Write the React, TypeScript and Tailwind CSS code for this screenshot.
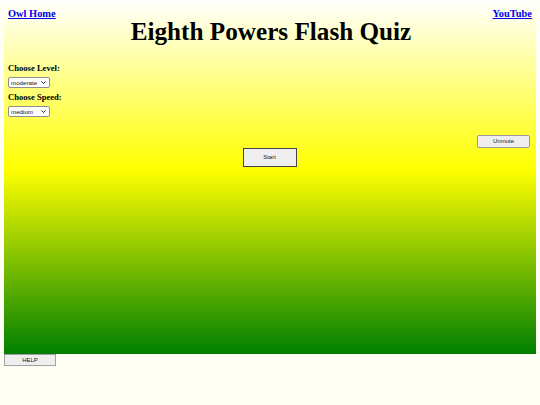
import React from 'react'

function Select({ value, options }: { value: string; options: string[] }) {
  return (
    <div className="relative h-[11px] w-[42px]">
      <select
        defaultValue={value}
        className="block h-[11px] w-[42px] appearance-none rounded-[2px] border border-[#8f8f8f] bg-white pl-[2px] font-['Liberation_Sans',sans-serif] text-[6.2px] leading-[9px] text-[#111]"
      >
        {options.map((o) => (
          <option key={o}>{o}</option>
        ))}
      </select>
      <svg
        className="pointer-events-none absolute right-[4px] top-[4px]"
        width="5"
        height="3"
        viewBox="0 0 5 3"
      >
        <path d="M0.5 0.5 L2.5 2.5 L4.5 0.5" stroke="#222" strokeWidth="1" fill="none" />
      </svg>
    </div>
  )
}

export default function App() {
  return (
    <div className="min-h-[405px] w-[540px] bg-[#fffff5] font-['Liberation_Serif',serif]">
      <div className="mx-1 h-[354px] bg-[linear-gradient(to_bottom,#ffffff_0%,#ffff00_48%,#008000_100%)]">
        <div className="flex justify-between px-1 pt-[7px]">
          <a href="#" className="text-[10.4px] font-bold leading-[14px] text-[#0000ee] underline">Owl Home</a>
          <a href="#" className="text-[10.4px] font-bold leading-[14px] text-[#0000ee] underline">YouTube</a>
        </div>
        <h1 className="-mt-[3px] pl-[2px] text-center text-[25.2px] font-bold leading-[28px] text-black">
          Eighth Powers Flash Quiz
        </h1>
        <div className="mt-[16px] flex flex-col items-start pl-1">
          <div className="text-[8.6px] font-bold leading-[12px]">Choose Level:</div>
          <div className="mt-[3px]">
            <Select value="moderate" options={['easy', 'moderate', 'hard']} />
          </div>
          <div className="mt-[3px] text-[8.6px] font-bold leading-[12px]">Choose Speed:</div>
          <div className="mt-[3px]">
            <Select value="medium" options={['slow', 'medium', 'fast']} />
          </div>
        </div>
        <div className="mt-[18px] flex justify-end pr-[6px]">
          <button className="h-[13px] w-[53px] rounded-[2px] border border-[#9a9a9a] bg-[#efefef] font-['Liberation_Sans',sans-serif] text-[6px] text-[#222]">
            Unmute
          </button>
        </div>
        <div className="flex justify-center pr-[1px]">
          <button className="h-[19px] w-[54px] border border-[#444] bg-[#efefef] font-['Liberation_Sans',sans-serif] text-[6px] text-[#222]">
            Start
          </button>
        </div>
      </div>
      <div className="flex pl-1">
        <button className="h-[12px] w-[52px] border border-[#a0a0a0] bg-[#efefef] font-['Liberation_Sans',sans-serif] text-[6px] leading-[10px] text-[#222]">
          HELP
        </button>
      </div>
    </div>
  )
}
